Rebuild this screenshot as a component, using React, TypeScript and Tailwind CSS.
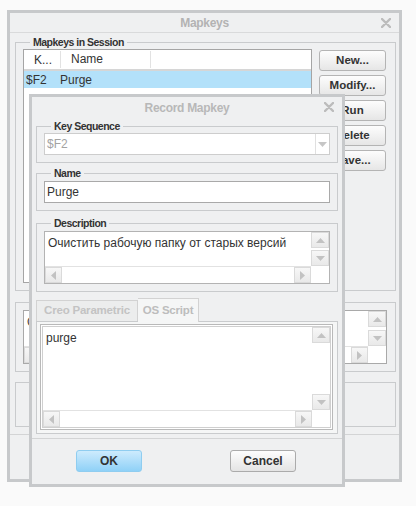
import React from "react";

type Dir = "up" | "down" | "left" | "right";

function Arrow({ dir, color = "#c2c2c2" }: { dir: Dir; color?: string }) {
  const vertical = dir === "up" || dir === "down";
  const pts = {
    up: "0,5 4.5,0 9,5",
    down: "0,0 9,0 4.5,5",
    left: "5,0 5,9 0,4.5",
    right: "0,0 5,4.5 0,9",
  }[dir];
  return (
    <svg width={vertical ? 9 : 5} height={vertical ? 5 : 9} viewBox={vertical ? "0 0 9 5" : "0 0 5 9"}>
      <polygon points={pts} fill={color} />
    </svg>
  );
}

function CloseX() {
  return (
    <svg width="10" height="10" viewBox="0 0 10 10">
      <path d="M1 1 L9 9 M9 1 L1 9" stroke="#bcbcbc" strokeWidth="2.4" strokeLinecap="round" />
    </svg>
  );
}

function SBtn({ dir, className = "" }: { dir: Dir; className?: string }) {
  return (
    <div
      className={`flex items-center justify-center border border-[#dadada] bg-gradient-to-b from-[#f7f7f7] to-[#e9e9e9] ${className}`}
    >
      <Arrow dir={dir} />
    </div>
  );
}

// box with both scrollbars, like the Creo text areas
function ScrollBox({
  children,
  className = "",
}: {
  children?: React.ReactNode;
  className?: string;
}) {
  return (
    <div className={`flex flex-col bg-white ${className}`}>
      <div className="flex flex-1 min-h-0">
        <div className="flex-1 min-w-0 overflow-hidden px-[3px] pt-[2px]">{children}</div>
        <div className="w-[18px] flex flex-col">
          <SBtn dir="up" className="h-[16px]" />
          <div className="flex-1 bg-white" />
          <SBtn dir="down" className="h-[16px]" />
        </div>
      </div>
      <div className="h-[17px] flex">
        <div className="flex-1 flex border-t border-[#e2e2e2]">
          <SBtn dir="left" className="w-[17px]" />
          <div className="flex-1 bg-white" />
          <SBtn dir="right" className="w-[17px]" />
        </div>
        <div className="w-[18px] bg-white" />
      </div>
    </div>
  );
}

function Group({
  label,
  className = "",
  children,
}: {
  label: string;
  className?: string;
  children: React.ReactNode;
}) {
  return (
    <fieldset className={`border border-[#c9cbcd] px-[7px] ${className}`}>
      <legend className="ml-[7px] px-[3px] text-[10.5px] leading-[14px] font-bold tracking-[-0.5px] text-[#333]">
        {label}
      </legend>
      {children}
    </fieldset>
  );
}

function SideButton({ label }: { label: string }) {
  return (
    <button className="h-[21px] w-[67px] rounded-[3px] border border-[#b4b4b4] bg-gradient-to-b from-[#fdfdfd] to-[#e6e6e6] text-[11.5px] font-bold text-[#333]">
      {label}
    </button>
  );
}

export default function App() {
  return (
    <div className="relative w-[416px] h-[506px] overflow-hidden bg-[#fafafa] pt-[10px] pl-[7px] font-['Liberation_Sans',Arial,sans-serif] text-[12px] text-[#333]">
      {/* Mapkeys window */}
      <div className="w-[395px] h-[472px] border-[3px] border-[#c7c9cb] bg-[#eff0f1] flex flex-col">
        <div className="relative h-[20px] border-b border-[#d9dadb] flex items-center justify-center">
          <span className="text-[12px] font-bold tracking-[-0.3px] text-[#b3b3b3]">Mapkeys</span>
          <span className="absolute right-[8px] top-[5px]">
            <CloseX />
          </span>
        </div>

        <div className="px-[5px] pr-[3px]">
          <Group label="Mapkeys in Session" className="mt-[2px] pb-[7px] pr-[8px]">
            <div className="flex gap-[7px]">
              <div className="w-[289px] h-[234px] border border-[#a5a5a5] bg-white">
                <div className="h-[21px] flex items-center border-b-2 border-[#d6d6d6] relative">
                  <span className="w-[36px] pl-[10px]">K...</span>
                  <span className="w-[90px] pl-[10px] border-l border-[#e2e2e2] h-[17px] leading-[17px]">Name</span>
                  <span className="flex-1 border-l border-[#e2e2e2] h-[17px]" />
                </div>
                <div className="h-[17px] flex items-center bg-[#b3e1fa]">
                  <span className="w-[36px] pl-[2px]">$F2</span>
                  <span>Purge</span>
                </div>
              </div>
              <div className="flex flex-col gap-[4px] pt-[1px]">
                <SideButton label="New..." />
                <SideButton label="Modify..." />
                <SideButton label="Run" />
                <SideButton label="Delete" />
                <SideButton label="Save..." />
              </div>
            </div>
          </Group>

          <div className="mt-[11px] h-[70px] border border-[#c9cbcd] pt-[7px] pl-[7px] pr-[8px]">
            <ScrollBox className="h-[54px] border border-[#a9a9a9]">
              <span className="text-[#444]">Creo</span>
            </ScrollBox>
          </div>

          <div className="mt-[10px] h-[45px] border border-[#c9cbcd]" />
        </div>
        <div className="mt-[7px] border-t border-[#d3d4d5]" />
      </div>

      {/* Record Mapkey dialog, lying over the Mapkeys window */}
      <div className="absolute left-[29px] top-[94px] w-[316px] h-[393px] border-[3px] border-[#c7c9cb] bg-[#eff0f1] flex flex-col">
        <div className="relative h-[22px] flex items-center justify-center">
          <span className="text-[12px] font-bold tracking-[-0.3px] text-[#b8b8b8]">Record Mapkey</span>
          <span className="absolute right-[8px] top-[5px]">
            <CloseX />
          </span>
        </div>

        <div className="px-[4px]">
          <Group label="Key Sequence" className="pb-[7px]">
            <div className="h-[22px] border border-[#cdcdcd] bg-white flex">
              <span className="flex-1 pl-[2px] leading-[20px] text-[#a3a3a3]">$F2</span>
              <span className="w-[14px] border-l border-[#e0e0e0] flex items-center justify-center">
                <Arrow dir="down" color="#c6c6c6" />
              </span>
            </div>
          </Group>

          <Group label="Name" className="mt-[3px] pt-[1px] pb-[7px]">
            <div className="h-[22px] border border-[#a9a9a9] bg-white pl-[2px] leading-[20px]">Purge</div>
          </Group>

          <Group label="Description" className="mt-[5px] pt-[1px] pb-[7px]">
            <ScrollBox className="h-[53px] border border-[#b3b3b3]">
              <span className="leading-[15px]">Очистить рабочую папку от старых версий</span>
            </ScrollBox>
          </Group>

          {/* tabs */}
          <div className="mt-[6px] flex items-end h-[23px]">
            <div className="h-[21px] w-[102px] border border-b-0 border-[#d2d2d2] bg-[#eceded] flex items-center justify-center text-[11.5px] font-bold tracking-[-0.2px] text-[#c3c3c3]">
              Creo Parametric
            </div>
            <div className="relative top-px h-[24px] w-[61px] border border-b-0 border-l-0 border-[#d2d2d2] bg-[#f5f6f6] flex items-center justify-center text-[11.5px] font-bold tracking-[-0.2px] text-[#bdbdbd]">
              OS Script
            </div>
          </div>
          <div className="h-[113px] border border-[#c9cbcd] bg-[#f5f6f6] pt-[2px] pl-[3px] pr-[4px] pb-[3px]">
            <div className="h-[106px] border border-[#b9b9b9] p-px bg-white">
              <ScrollBox className="h-full border border-[#cfcfcf]">
                <span className="leading-[15px]">purge</span>
              </ScrollBox>
            </div>
          </div>
        </div>

        <div className="mt-[4px] border-t border-[#d3d4d5] flex pt-[11px] pl-[44px] gap-[88px]">
          <button className="h-[22px] w-[66px] rounded-[3px] border border-[#8fcdf0] bg-gradient-to-b from-[#cdebfd] to-[#8fd1f7] text-[12px] font-bold text-[#333]">
            OK
          </button>
          <button className="h-[22px] w-[66px] rounded-[3px] border border-[#ababab] bg-gradient-to-b from-[#fdfdfd] to-[#e4e4e4] text-[12px] font-bold text-[#333]">
            Cancel
          </button>
        </div>
      </div>
    </div>
  );
}
